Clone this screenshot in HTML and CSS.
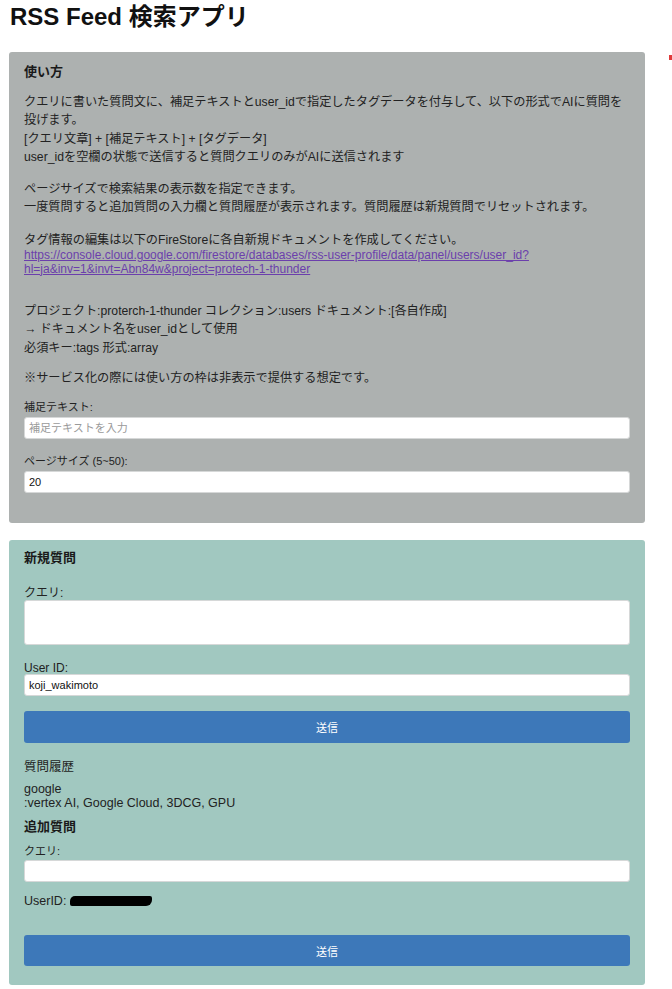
FILE: index.html
```html
<!DOCTYPE html>
<html lang="ja">
<head>
<meta charset="utf-8">
<title>RSS Feed 検索アプリ</title>
<link rel="stylesheet" href="styles.css">
</head>
<body>
<div class="page">
  <h1 class="title">RSS Feed 検索アプリ</h1>

  <section class="panel panel-help">
    <h3 class="panel-title">使い方</h3>
    <p class="text">クエリに書いた質問文に、補足テキストとuser_idで指定したタグデータを付与して、以下の形式でAIに質問を投げます。<br>[クエリ文章] + [補足テキスト] + [タグデータ]<br>user_idを空欄の状態で送信すると質問クエリのみがAIに送信されます</p>
    <p class="text">ページサイズで検索結果の表示数を指定できます。<br>一度質問すると追加質問の入力欄と質問履歴が表示されます。質問履歴は新規質問でリセットされます。</p>
    <div class="text text-link">タグ情報の編集は以下のFireStoreに各自新規ドキュメントを作成してください。
      <a class="link" href="#">https://console.cloud.google.com/firestore/databases/rss-user-profile/data/panel/users/user_id?hl=ja&amp;inv=1&amp;invt=Abn84w&amp;project=protech-1-thunder</a>
    </div>
    <p class="text">プロジェクト:proterch-1-thunder コレクション:users ドキュメント:[各自作成]<br>→ ドキュメント名をuser_idとして使用<br>必須キー:tags 形式:array</p>
    <p class="text text-note">※サービス化の際には使い方の枠は非表示で提供する想定です。</p>
    <label class="label label-small">補足テキスト:</label>
    <input class="field" type="text" placeholder="補足テキストを入力">
    <label class="label label-small label-gap">ページサイズ (5~50):</label>
    <input class="field" type="text" value="20">
  </section>

  <section class="panel panel-query">
    <h3 class="panel-title">新規質問</h3>
    <label class="label label-query">クエリ:</label>
    <textarea class="field field-area"></textarea>
    <label class="label label-user">User ID:</label>
    <input class="field" type="text" value="koji_wakimoto">
    <button class="btn" type="button">送信</button>

    <div class="history-title">質問履歴</div>
    <div class="history">google<br>:vertex AI, Google Cloud, 3DCG, GPU</div>

    <h3 class="panel-title sub-title">追加質問</h3>
    <label class="label label-small label-add">クエリ:</label>
    <input class="field" type="text">
    <div class="userid">UserID: <span class="redact"></span></div>
    <button class="btn btn-last" type="button">送信</button>
  </section>
  <span class="edge-mark"></span>
</div>
</body>
</html>
```

FILE: styles.css
```css
html, body {
  margin: 0;
  padding: 0;
  background: #ffffff;
}

body {
  font-family: "Liberation Sans", "Noto Sans CJK JP", sans-serif;
  color: #222222;
}

.page {
  position: relative;
  width: 636px;
  padding: 0 9px;
}

.title {
  margin: 0;
  padding: 3px 0 0 1px;
  height: 52px;
  box-sizing: border-box;
  font-size: 24px;
  line-height: 28px;
  font-weight: bold;
  color: #111111;
}

.panel {
  border-radius: 3px;
  padding: 12px 15px 15px;
  margin-bottom: 17px;
}

.panel-help {
  background: #adb1b0;
  padding-bottom: 30px;
}

.panel-query {
  background: #a1c8c0;
  padding-top: 10px;
}

.panel-title {
  margin: 0;
  font-size: 13px;
  line-height: 16px;
  font-weight: bold;
  color: #1a1a1a;
}

.text {
  margin: 0;
  font-size: 12.2px;
  line-height: 18.3px;
}

.panel-help .panel-title {
  margin-bottom: 13px;
}

.text + .text {
  margin-top: 14px;
}

.text-link {
  padding-bottom: 12px;
}

.text + .text-note {
  margin-top: 12px;
}

.link {
  display: block;
  font-size: 12px;
  line-height: 13.5px;
  color: #6b3fac;
  text-decoration: underline;
}

.label {
  display: block;
  font-size: 12px;
  line-height: 13px;
  margin-bottom: 2px;
  color: #222222;
}

.label-small {
  font-size: 11px;
  margin-top: 14px;
  margin-bottom: 3px;
}

.label-gap {
  margin-top: 16px;
}

.field {
  display: block;
  width: 100%;
  height: 22px;
  box-sizing: border-box;
  margin: 0;
  padding: 2px 4px;
  border: 1px solid #d6d8d8;
  border-radius: 3px;
  background: #ffffff;
  font-family: "Liberation Sans", "Noto Sans CJK JP", sans-serif;
  font-size: 11px;
  color: #111111;
  outline: none;
}

.field::placeholder {
  color: #9a9a9a;
}

.field-area {
  height: 45px;
  resize: none;
}

.label-query {
  margin-top: 21px;
  margin-bottom: 0;
}

.label-user {
  margin-top: 17px;
  margin-bottom: -1px;
}

.btn {
  display: block;
  width: 100%;
  height: 32px;
  margin-top: 15px;
  border: none;
  border-radius: 3px;
  background: #3d78b9;
  color: #ffffff;
  font-family: "Liberation Sans", "Noto Sans CJK JP", sans-serif;
  font-size: 11px;
}

.history-title {
  margin-top: 16px;
  font-size: 12.5px;
  line-height: 16px;
}

.history {
  margin-top: 7px;
  font-size: 12.5px;
  line-height: 14px;
}

.sub-title {
  margin-top: 9px;
}

.label-add {
  margin-top: 10px;
  margin-bottom: 2px;
}

.userid {
  margin-top: 11px;
  font-size: 12.5px;
  line-height: 16px;
}

.redact {
  display: inline-block;
  width: 82px;
  height: 10px;
  vertical-align: -1px;
  background: #000000;
  border-radius: 5px 2px 6px 2px;
}

.btn-last {
  margin-top: 26px;
  margin-bottom: 4px;
  height: 31px;
}

.edge-mark {
  position: absolute;
  left: 669px;
  top: 55px;
  width: 3px;
  height: 5px;
  background: #e03a3a;
}
```
